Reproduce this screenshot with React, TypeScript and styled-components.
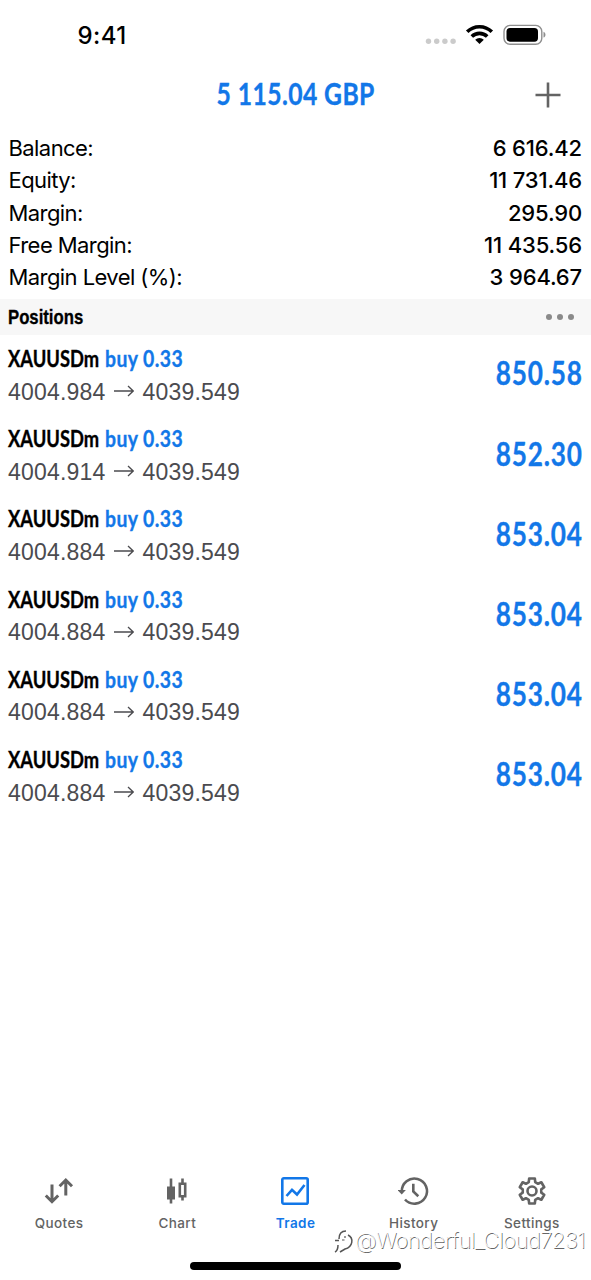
import React, { ReactNode } from 'react';
import styled, { createGlobalStyle } from 'styled-components';

const GlobalStyle = createGlobalStyle`
  * {
    box-sizing: border-box;
  }
  body {
    margin: 0;
    background: #fff;
    font-family: Inter, 'Liberation Sans', sans-serif;
    color: #000;
  }
`;

const BLUE = '#1277e8';
const GRAY = '#636363';

const Screen = styled.div`
  display: flex;
  flex-direction: column;
  width: 591px;
  height: 1280px;
  background: #fff;
  overflow: hidden;
`;

// squeezes a regular face into a condensed one
const Condensed = styled.span<{
  $scale: number;
  $origin?: string;
  $spacing?: number;
}>`
  display: inline-block;
  white-space: pre;
  transform: scaleX(${(p) => p.$scale});
  transform-origin: ${(p) => p.$origin || 'left'} center;
  letter-spacing: ${(p) => p.$spacing || 0}px;
  -webkit-text-stroke: 0.35px currentColor;
`;

const StatusBar = styled.div`
  display: flex;
  align-items: center;
  justify-content: space-between;
  height: 70px;
  padding: 0 45px 0 77.5px;
`;
const Clock = styled.div`
  font-size: 24px;
  line-height: 30px;
  font-weight: 550;
  letter-spacing: 0.4px;
  padding-top: 2px;
`;
const StatusIcons = styled.svg`
  display: block;
  width: 122px;
  height: 24px;
`;

const Header = styled.div`
  display: grid;
  grid-template-columns: 60px 1fr 60px;
  align-items: center;
  height: 62px;
  padding: 0 13px;
  padding-bottom: 12px;
`;
const Profit = styled.div`
  grid-column: 2;
  text-align: center;
  font: 700 30.5px/36px Lato, sans-serif;
  color: ${BLUE};
  padding-bottom: 4px;
`;
const AddButton = styled.button`
  display: flex;
  justify-content: center;
  padding: 0;
  border: 0;
  background: none;
`;

const Summary = styled.div`
  padding: 0 9px;
  height: 167px;
`;
const SummaryRow = styled.div`
  display: flex;
  justify-content: space-between;
  font-size: 22px;
  line-height: 32.3px;
`;
const SummaryLabel = styled.span`
  letter-spacing: -0.57px;
  margin-left: -0.5px;
`;
const SummaryValue = styled.span`
  font-weight: 450;
  letter-spacing: -0.15px;
`;

const SectionHeader = styled.div`
  display: flex;
  align-items: center;
  justify-content: space-between;
  height: 36px;
  padding: 0 17.5px 0 8px;
  background: #f7f7f7;
  font: 700 20.5px/36px 'Liberation Sans', sans-serif;
`;
const Dots = styled.div`
  display: flex;
  gap: 5px;
`;
const Dot = styled.i`
  width: 6px;
  height: 6px;
  border-radius: 50%;
  background: #8a8a8a;
`;

const PositionList = styled.div`
  flex: 1;
`;
const PositionRow = styled.div`
  display: flex;
  align-items: center;
  justify-content: space-between;
  height: 80.2px;
  padding: 0 8px;
`;
const PositionInfo = styled.div``;
const SymbolLine = styled.div`
  display: flex;
  height: 33px;
  font: 700 22.8px/32px Lato, sans-serif;
`;
const SymbolName = styled.div`
  width: 97px;
`;
const Side = styled.div`
  width: 80px;
  color: ${BLUE};
`;
const PriceLine = styled.div`
  display: flex;
  align-items: center;
  height: 33px;
  font: 400 23px/33px 'Liberation Sans', sans-serif;
  letter-spacing: 0.2px;
  color: #4b4b4f;
  padding-top: 1px;
`;
const Arrow = styled.svg`
  width: 20px;
  height: 12px;
  margin: 0 8.5px 2px;
`;
const Amount = styled.div`
  font: 700 31.5px/38px Lato, sans-serif;
  color: ${BLUE};
  padding-bottom: 3.5px;
`;

const TabBar = styled.div`
  display: grid;
  grid-template-columns: repeat(5, 1fr);
  height: 92px;
`;
const Tab = styled.div<{ $active?: boolean }>`
  display: flex;
  flex-direction: column;
  align-items: center;
  color: ${(p) => (p.$active ? BLUE : GRAY)};
  font-size: 13.5px;
  line-height: 18px;
  font-weight: ${(p) => (p.$active ? 600 : 500)};
  letter-spacing: 0.4px;
  svg {
    width: 32px;
    height: 32px;
    margin: 5px 0 6.5px;
  }
`;

const Watermark = styled.div`
  position: absolute;
  left: 333px;
  top: 1226px;
  display: flex;
  align-items: center;
  font-size: 22px;
  line-height: 28px;
  font-weight: 250;
  letter-spacing: -0.55px;
  color: #fff;
  white-space: nowrap;
  text-shadow: 0.8px 0.8px 0 #666;
`;

const HomeArea = styled.div`
  display: flex;
  justify-content: center;
  height: 18px;
`;
const HomeIndicator = styled.div`
  width: 211px;
  height: 7.5px;
  border-radius: 4px;
  background: #000;
`;

const summary = [
  { label: 'Balance:', value: '6 616.42' },
  { label: 'Equity:', value: '11 731.46' },
  { label: 'Margin:', value: '295.90' },
  { label: 'Free Margin:', value: '11 435.56' },
  { label: 'Margin Level (%):', value: '3 964.67' },
];

const positions = [
  { open: '4004.984', profit: '850.58' },
  { open: '4004.914', profit: '852.30' },
  { open: '4004.884', profit: '853.04' },
  { open: '4004.884', profit: '853.04' },
  { open: '4004.884', profit: '853.04' },
  { open: '4004.884', profit: '853.04' },
];

const Icon = ({ children }: { children: ReactNode }) => (
  <svg
    viewBox="0 0 32 32"
    fill="none"
    stroke="currentColor"
    strokeWidth="2.6"
  >
    {children}
  </svg>
);

const QuotesIcon = () => (
  <Icon>
    <g strokeWidth="3">
      <path d="M9 9.5v17M2.8 20.5L9 26.7l6.2-6.2" />
      <path d="M22.8 20.5V5M16.6 11.2L22.800 5l6.200 6.200" />
    </g>
  </Icon>
);
const ChartIcon = () => (
  <Icon>
    <path d="M10 3.500v25" />
    <path d="M6 11.500h8v13H6z" fill="currentColor" stroke="none" />
    <path d="M21.500 3.500v5M21.500 21v4.500" />
    <path d="M18.800 8.800h5.400v12.400h-5.400z" />
  </Icon>
);
const TradeIcon = () => (
  <Icon>
    <rect x="3.300" y="3.300" width="25.400" height="25.400" rx="1.500" />
    <path d="M7.500 21l5.500-6.200 5 4.700 7.500-9.500" />
  </Icon>
);
const HistoryIcon = () => (
  <Icon>
    <path d="M3.800 16.500A12.600 12.600 0 1 1 7 24.500" />
    <path d="M-0.500 15h8.400l-4.200 4.500z" fill="currentColor" stroke="none" />
    <path d="M15.300 8.800v7.700l5 4.800" />
  </Icon>
);
const teeth = Array.from({ length: 6 }, (_, i) => {
  const at = (r: number, deg: number) => {
    const a = ((i * 60 - 90 + deg) * Math.PI) / 180;
    return `${(16 + r * Math.cos(a)).toFixed(2)} ${(
      16 +
      r * Math.sin(a)
    ).toFixed(2)}`;
  };
  return [at(9.4, -20), at(12.8, -13), at(12.8, 13), at(9.4, 20)].join('L');
});
const SettingsIcon = () => (
  <Icon>
    <path d={`M${teeth.join('L')}Z`} strokeLinejoin="round" />
    <circle cx="16" cy="16" r="4.500" />
  </Icon>
);

const tabs = [
  { name: 'Quotes', icon: <QuotesIcon /> },
  { name: 'Chart', icon: <ChartIcon /> },
  { name: 'Trade', icon: <TradeIcon />, active: true },
  { name: 'History', icon: <HistoryIcon /> },
  { name: 'Settings', icon: <SettingsIcon /> },
];

const Status = () => (
  <StatusBar>
    <Clock>9:41</Clock>
    <StatusIcons viewBox="0 0 122 24">
      <g fill="#cbcbcb">
        <circle cx="4.500" cy="18.300" r="2.700" />
        <circle cx="12.700" cy="18.300" r="2.700" />
        <circle cx="20.900" cy="18.300" r="2.700" />
        <circle cx="29.100" cy="18.300" r="2.700" />
      </g>
      <g fill="none" stroke="#000" strokeWidth="3.600">
        <path d="M43.200 8.800a17.500 17.500 0 0 1 24.600 0" />
        <path d="M47.800 13.500a11 11 0 0 1 15.400 0" />
      </g>
      <path d="M55.500 21l-4.300-4.200a6.200 6.200 0 0 1 8.600 0z" />
      <rect
        x="80"
        y="2.400"
        width="37.800"
        height="18.800"
        rx="6"
        fill="none"
        stroke="#8f8f8f"
        strokeWidth="1.400"
      />
      <rect x="82.500" y="4.900" width="31.500" height="13.800" rx="3.600" />
      <path d="M119.500 8.800c2.600 1 2.600 4.800 0 5.800z" fill="#8f8f8f" />
    </StatusIcons>
  </StatusBar>
);

const Position = ({ open, profit }: { open: string; profit: string }) => (
  <PositionRow>
    <PositionInfo>
      <SymbolLine>
        <SymbolName>
          <Condensed $scale={0.805}>XAUUSDm</Condensed>
        </SymbolName>
        <Side>
          <Condensed $scale={0.85} $spacing={0.5}>
            buy 0.33
          </Condensed>
        </Side>
      </SymbolLine>
      <PriceLine>
        {open}
        <Arrow
          viewBox="0 0 20 12"
          fill="none"
          stroke="currentColor"
          strokeWidth="1.300"
        >
          <path d="M0 6h19M14 1l5.200 5-5.200 5" />
        </Arrow>
        4039.549
      </PriceLine>
    </PositionInfo>
    <Amount>
      <Condensed $scale={0.83} $origin="right" $spacing={1}>
        {profit}
      </Condensed>
    </Amount>
  </PositionRow>
);

const App = () => {
  return (
    <Screen>
      <GlobalStyle />
      <Status />
      <Header>
        <Profit>
          <Condensed $scale={0.81} $origin="center" $spacing={0.5}>
            5 115.04 GBP
          </Condensed>
        </Profit>
        <AddButton aria-label="New order">
          <svg width="26" height="26" stroke={GRAY} strokeWidth="2.600">
            <path d="M13 0.500v25M0.500 13h25" />
          </svg>
        </AddButton>
      </Header>
      <Summary>
        {summary.map((item) => (
          <SummaryRow key={item.label}>
            <SummaryLabel>{item.label}</SummaryLabel>
            <SummaryValue>{item.value}</SummaryValue>
          </SummaryRow>
        ))}
      </Summary>
      <SectionHeader>
        <Condensed $scale={0.815}>Positions</Condensed>
        <Dots>
          <Dot />
          <Dot />
          <Dot />
        </Dots>
      </SectionHeader>
      <PositionList>
        {positions.map((item, index) => (
          <Position key={index} {...item} />
        ))}
      </PositionList>
      <TabBar>
        {tabs.map((tab) => (
          <Tab key={tab.name} $active={tab.active}>
            {tab.icon}
            {tab.name}
          </Tab>
        ))}
      </TabBar>
      <HomeArea>
        <HomeIndicator />
      </HomeArea>
      <Watermark>
        <svg width="22" height="26" fill="none" stroke="#555">
          <path
            d="M2 13.500h4M5 18c0 4-1 6-3 7M6 12c0-5 2-8 7-8M15 8c6 3 5 12-3 14l-5 3"
            strokeWidth="1.500"
          />
          <path d="M9 13h2.500M12 9v2" strokeWidth="1.200" />
        </svg>
        @Wonderful_Cloud7231
      </Watermark>
    </Screen>
  );
};

export default App;
